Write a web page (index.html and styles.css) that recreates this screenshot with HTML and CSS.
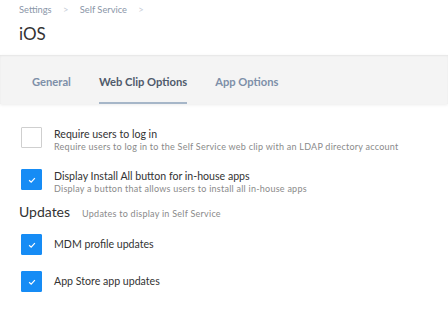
FILE: index.html
```html
<!DOCTYPE html>
<html lang="en">
<head>
    <meta charset="UTF-8">
    <meta name="viewport" content="width=device-width, initial-scale=1.0">
    <title>iOS - Self Service</title>
    <link rel="stylesheet" href="styles.css">
</head>
<body>
    <div class="header">
        <div class="breadcrumb">
            <span>Settings</span>
            <span class="sep">&gt;</span>
            <span>Self Service</span>
            <span class="sep">&gt;</span>
        </div>
        <h1>iOS</h1>
    </div>

    <div class="tabs">
        <a class="tab">General</a>
        <a class="tab active">Web Clip Options</a>
        <a class="tab">App Options</a>
    </div>

    <div class="content">
        <div class="option">
            <span class="box"></span>
            <div class="text">
                <div class="title">Require users to log in</div>
                <div class="desc">Require users to log in to the Self Service web clip with an LDAP directory account</div>
            </div>
        </div>
        <div class="option">
            <span class="box checked"><svg viewBox="0 0 10 10"><path d="M2.6 5.2 L4.3 6.8 L7.4 3.4"/></svg></span>
            <div class="text">
                <div class="title">Display Install All button for in-house apps</div>
                <div class="desc">Display a button that allows users to install all in-house apps</div>
            </div>
        </div>

        <div class="section">
            <h2>Updates</h2>
            <span class="hint">Updates to display in Self Service</span>
        </div>

        <div class="option single">
            <span class="box checked"><svg viewBox="0 0 10 10"><path d="M2.6 5.2 L4.3 6.8 L7.4 3.4"/></svg></span>
            <div class="title">MDM profile updates</div>
        </div>
        <div class="option single">
            <span class="box checked"><svg viewBox="0 0 10 10"><path d="M2.6 5.2 L4.3 6.8 L7.4 3.4"/></svg></span>
            <div class="title">App Store app updates</div>
        </div>
    </div>
</body>
</html>
```

FILE: styles.css
```css
body {
    margin: 0;
    font-family: Lato, "Open Sans", Arial, sans-serif;
    background: white;
    color: #333;
}
.header {
    height: 55px;
    padding: 4px 19px 0;
    box-sizing: border-box;
}
.breadcrumb {
    font-size: 9.3px;
    line-height: 12px;
    color: #8a96a8;
}
.breadcrumb .sep {
    color: #c5ccd6;
    margin: 0 9px;
}
h1 {
    margin: 8px 0 0;
    font-size: 17px;
    line-height: 20px;
    font-weight: normal;
    color: #333;
}
.tabs {
    display: flex;
    height: 49px;
    padding-left: 18px;
    background: #f4f4f4;
    box-shadow: inset 0 1px 2px rgba(0,0,0,0.06), 0 1px 3px rgba(0,0,0,0.08);
    box-sizing: border-box;
}
.tab {
    display: flex;
    align-items: center;
    margin: 0 14px;
    padding-top: 6px;
    font-size: 11.2px;
    font-weight: bold;
    color: #7d8fa8;
    border-bottom: 2px solid transparent;
}
.tab.active {
    color: #4f5a6b;
    border-bottom-color: #a6b6c8;
}
.content {
    padding: 23px 21px 0;
}
.option {
    display: flex;
    align-items: flex-start;
    gap: 12px;
    margin-bottom: 16px;
}
.option.single {
    align-items: center;
    margin-bottom: 16px;
}
.box {
    flex: none;
    width: 21px;
    height: 21px;
    border: 1px solid #cfcfcf;
    box-sizing: border-box;
    border-radius: 1px;
    display: flex;
    align-items: center;
    justify-content: center;
}
.box.checked {
    background: #168cf5;
    border-color: #168cf5;
}
.box svg {
    width: 12px;
    height: 12px;
    fill: none;
    stroke: white;
    stroke-width: 1;
}
.title {
    font-size: 10.6px;
    line-height: 13px;
    margin-top: 1px;
    color: #333;
}
.option.single .title {
    margin-top: 0;
}
.desc {
    font-size: 9px;
    line-height: 12px;
    letter-spacing: 0.25px;
    color: #8a8a8a;
}
.section {
    display: flex;
    align-items: baseline;
    gap: 12px;
    margin: -8px 0 14px -2px;
}
h2 {
    margin: 0;
    font-size: 14px;
    font-weight: normal;
    color: #333;
}
.hint {
    font-size: 9px;
    letter-spacing: 0.25px;
    color: #8a8a8a;
}
```
